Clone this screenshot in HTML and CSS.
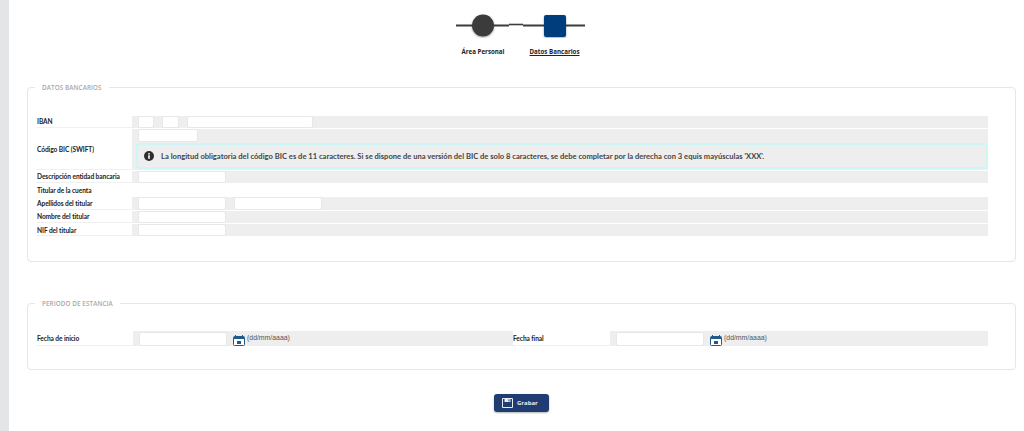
FILE: index.html
```html
<!DOCTYPE html>
<html lang="es">
<head>
<meta charset="utf-8">
<title>Datos Bancarios</title>
<link rel="stylesheet" href="styles.css">
</head>
<body>
<div class="page">
  <aside class="rail"></aside>
  <main class="main">
    <nav class="stepper">
      <svg class="track" width="132" height="26" viewBox="0 0 132 26">
        <defs><filter id="sh" x="-30%" y="-30%" width="160%" height="160%"><feDropShadow dx="0" dy="1" stdDeviation="1" flood-color="#000" flood-opacity=".35"/></filter></defs>
        <path d="M1 13.5H54" stroke="#3c3c3c" stroke-width="2"/>
        <path d="M54 12.5H68" stroke="#3c3c3c" stroke-width="1.6"/>
        <path d="M68 13.5H130" stroke="#3c3c3c" stroke-width="2"/>
        <circle cx="28" cy="13.5" r="11" fill="#3b3b3b" filter="url(#sh)"/>
        <rect x="89" y="3" width="22" height="22" rx="2" fill="#003d7c" filter="url(#sh)"/>
      </svg>
      <div class="step-labels">
        <span class="step-label">Área Personal</span>
        <span class="step-label current">Datos Bancarios</span>
      </div>
    </nav>

    <fieldset class="panel bank">
      <legend>DATOS BANCARIOS</legend>
      <div class="rows">
        <div class="row first"><div class="label">IBAN</div><div class="value">
          <input class="in w16"><input class="in w17 ml8"><input class="in w126 ml8">
        </div></div>
        <div class="row tall"><div class="label">Código BIC (SWIFT)</div><div class="value stack">
          <input class="in w60">
          <div class="alert">
            <svg class="info" width="10" height="10" viewBox="0 0 10 10"><circle cx="5" cy="5" r="5" fill="#2e2e2e"/><rect x="4.2" y="4.2" width="1.6" height="3.6" fill="#fff"/><rect x="4.2" y="2.1" width="1.6" height="1.4" fill="#fff"/></svg>
            <span>La longitud obligatoria del código BIC es de 11 caracteres. Si se dispone de una versión del BIC de solo 8 caracteres, se debe completar por la derecha con 3 equis mayúsculas 'XXX'.</span>
          </div>
        </div></div>
        <div class="row"><div class="label">Descripción entidad bancaria</div><div class="value"><input class="in w88"></div></div>
        <div class="row heading"><div class="label">Titular de la cuenta</div></div>
        <div class="row"><div class="label">Apellidos del titular</div><div class="value"><input class="in w88"><input class="in w88 ml8"></div></div>
        <div class="row"><div class="label">Nombre del titular</div><div class="value"><input class="in w88"></div></div>
        <div class="row"><div class="label">NIF del titular</div><div class="value"><input class="in w88"></div></div>
      </div>
    </fieldset>

    <fieldset class="panel stay">
      <legend>PERIODO DE ESTANCIA</legend>
      <div class="date-row">
        <div class="label">Fecha de inicio</div>
        <div class="value date">
          <input class="in w88">
          <svg class="cal" width="12" height="11" viewBox="0 0 12 11"><path d="M2.5 0v2M9.5 0v2" stroke="#1f5a8e" stroke-width="1"/><rect x=".5" y="1.5" width="11" height="9" rx="1" fill="#fff" stroke="#1f5a8e"/><rect x="1" y="1.5" width="10" height="2.5" fill="#1f5a8e"/><rect x="4" y="6" width="4" height="3" fill="#1f5a8e"/></svg>
          <span class="hint">(dd/mm/aaaa)</span>
        </div>
        <div class="label">Fecha final</div>
        <div class="value date">
          <input class="in w88">
          <svg class="cal" width="12" height="11" viewBox="0 0 12 11"><path d="M2.5 0v2M9.5 0v2" stroke="#1f5a8e" stroke-width="1"/><rect x=".5" y="1.5" width="11" height="9" rx="1" fill="#fff" stroke="#1f5a8e"/><rect x="1" y="1.5" width="10" height="2.5" fill="#1f5a8e"/><rect x="4" y="6" width="4" height="3" fill="#1f5a8e"/></svg>
          <span class="hint">(dd/mm/aaaa)</span>
        </div>
      </div>
    </fieldset>

    <div class="actions">
      <button class="save" type="button">
        <svg width="11" height="10" viewBox="0 0 11 10"><path d="M.5.5h10v9H.5z" fill="none" stroke="#e8ecf3"/><rect x="2.5" y="1" width="6" height="3" fill="#e8ecf3"/><rect x="6.5" y="1.4" width="1" height="2" fill="#1f3d73"/></svg>
        <span>Grabar</span>
      </button>
    </div>
  </main>
</div>
</body>
</html>
```

FILE: styles.css
```css
* { box-sizing: border-box; }
html, body { margin: 0; padding: 0; background: #fff; overflow: hidden; }
body { font-family: "Lato", "Open Sans", sans-serif; font-size: 6.6px; letter-spacing: -.08px; color: #222; }
.page { display: flex; height: 431px; }
.rail { width: 9px; background: #e4e5e7; flex: none; }
.main { flex: 1; min-width: 0; padding: 0 8px 0 18px; }

.stepper { display: flex; flex-direction: column; align-items: center; padding: 12px 0 0; margin-left: -2px; }
.track { display: block; }
.step-labels { display: flex; gap: 25px; margin-top: 9px; font-family: "Open Sans", sans-serif; font-weight: 700; line-height: 9px; color: #222; font-size: 6.2px; letter-spacing: 0; }
.step-label.current { text-decoration: underline; }

.panel { margin: 0; padding: 0 27px 0 9px; border: 1.5px solid #e6e6e6; border-radius: 4px; min-width: 0; }
.panel legend { margin-left: -2px; padding: 0 7px; font-family: "Open Sans", sans-serif; font-size: 6.3px; font-weight: 600; color: #a8a8a8; line-height: 9px; letter-spacing: .1px; }
.bank { margin-top: 27px; height: 179px; }
.stay { margin-top: 37px; height: 71px; }

.rows { display: flex; flex-direction: column; gap: 1px; margin-top: 23.5px; }
.row { display: grid; grid-template-columns: 95px 1fr; height: 12.33px; }
.row.first { height: 12.5px; }
.row.tall { height: 40.67px; }
.label { display: flex; align-items: center; font-weight: 700; color: #222; border-bottom: 1px solid #f0f0f0; white-space: nowrap; }
.row.heading .label { border-bottom: 0; }
.value { display: flex; align-items: center; background: #eee; padding-left: 6px; min-width: 0; }
.value.stack { flex-direction: column; align-items: stretch; padding-left: 4px; padding-bottom: 1px; }
.value.stack .in { margin-left: 2px; flex: none; }

.in { height: 12.5px; padding: 0; background: #fff; border: 1px solid #e8e8e8; border-radius: 2px; display: block; }
.w16 { width: 16px; } .w17 { width: 17px; } .w60 { width: 60px; } .w88 { width: 88px; } .w126 { width: 126px; }
.ml8 { margin-left: 8px; }

.alert { display: flex; align-items: center; gap: 7px; height: 26px; margin-top: 1px; padding-left: 6px; border: 2px solid #cdf6f6; border-radius: 2px; font-size: 7.6px; font-weight: 700; letter-spacing: 0; color: #444; white-space: nowrap; background: #eee; }
.info { flex: none; }

.date-row { display: grid; grid-template-columns: 96px 380px 97px 1fr; height: 14px; margin: 23px 0 0; }
.value.date { padding-left: 6px; gap: 0; }
.value.date .in { height: 14px; }
.cal { margin: 4px 0 0 6px; flex: none; }
.hint { margin: -2px 0 0 2px; font-family: "Liberation Sans", sans-serif; font-size: 6.9px; letter-spacing: 0; color: #555; }

.actions { display: flex; justify-content: center; padding: 24px 0 0 0; }
.save { display: flex; align-items: center; gap: 4px; width: 55px; height: 18px; padding: 0 0 0 8px; background: #1f3d73; border: 0; border-radius: 3px; color: #e8ecf3; font: 700 6px "Open Sans", sans-serif; box-shadow: 0 1px 2px rgba(0,0,0,.3); }
```
